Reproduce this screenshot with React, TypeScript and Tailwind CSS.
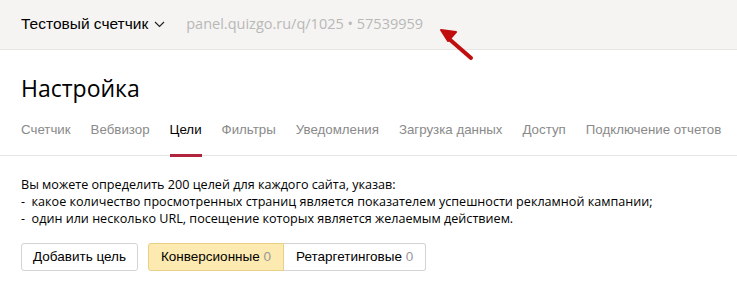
import React from 'react';

const tabs = ['Счетчик', 'Вебвизор', 'Цели', 'Фильтры', 'Уведомления', 'Загрузка данных', 'Доступ', 'Подключение отчетов'];

const App: React.FC = () => {
    return (
        <div className="relative w-[737px] h-[293px] bg-white overflow-hidden font-['Liberation_Sans',sans-serif]">
            {/* top bar */}
            <div className="h-[50px] bg-[#f5f4f2] border-b border-[#e6e5e3] flex items-center px-[21px] pb-[2px]">
                <span className="text-[15.5px] text-black whitespace-nowrap">Тестовый счетчик</span>
                <svg className="ml-[6px] mt-[1px]" width="11" height="7" viewBox="0 0 11 7" fill="none">
                    <path d="M1 1l4.5 4.5L10 1" stroke="#222" strokeWidth="1.2" />
                </svg>
                <span className="ml-[21px] text-[14.5px] text-[#b8b8b8] font-['Open_Sans',sans-serif] whitespace-nowrap">panel.quizgo.ru/q/1025 • 57539959</span>
            </div>

            {/* arrow */}
            <svg className="absolute left-[436px] top-[24px]" width="40" height="40" viewBox="0 0 40 40">
                <path d="M35 34L12 14" stroke="#c00d0d" strokeWidth="4" strokeLinecap="round" />
                <path d="M5 6l15 2-8 9z" fill="#c00d0d" stroke="#c00d0d" strokeWidth="2" strokeLinejoin="round" />
            </svg>

            <div className="px-[21px] pt-[22px]">
                <h1 className="text-[23px] leading-[32px] text-black font-['Open_Sans',sans-serif]">Настройка</h1>
            </div>

            <div className="mt-[16px] border-b border-[#e5e5e5] px-[21px] flex gap-[20px] h-[36px] whitespace-nowrap">
                {tabs.map((t) =>
                    t === 'Цели' ? (
                        <div key={t} className="relative text-[13.3px] text-black">
                            {t}
                            <div className="absolute left-0 right-0 bottom-[-2px] h-[3px] bg-[#b0243c]" />
                        </div>
                    ) : (
                        <div key={t} className="text-[13.3px] text-[#8a8a8a]">
                            {t}
                        </div>
                    )
                )}
            </div>

            <div className="px-[21px] pt-[20px] text-[12.6px] leading-[17px] text-black font-['Open_Sans',sans-serif]">
                <p>Вы можете определить 200 целей для каждого сайта, указав:</p>
                <p>-&nbsp; какое количество просмотренных страниц является показателем успешности рекламной кампании;</p>
                <p>-&nbsp; один или несколько URL, посещение которых является желаемым действием.</p>
            </div>

            <div className="px-[21px] mt-[16px] flex gap-[10px] text-[13.5px] whitespace-nowrap">
                <button className="h-[28px] px-[11px] border border-[#d4d4d4] rounded-[3px] bg-white text-black">
                    Добавить цель
                </button>
                <div className="flex h-[28px]">
                    <button className="px-[12px] border border-[#e7cf86] bg-[#fdeab0] rounded-l-[3px] text-black">
                        Конверсионные <span className="text-[#999]">0</span>
                    </button>
                    <button className="px-[12px] border border-l-0 border-[#d4d4d4] rounded-r-[3px] bg-white text-black">
                        Ретаргетинговые <span className="text-[#999]">0</span>
                    </button>
                </div>
            </div>
        </div>
    );
};

export default App;
